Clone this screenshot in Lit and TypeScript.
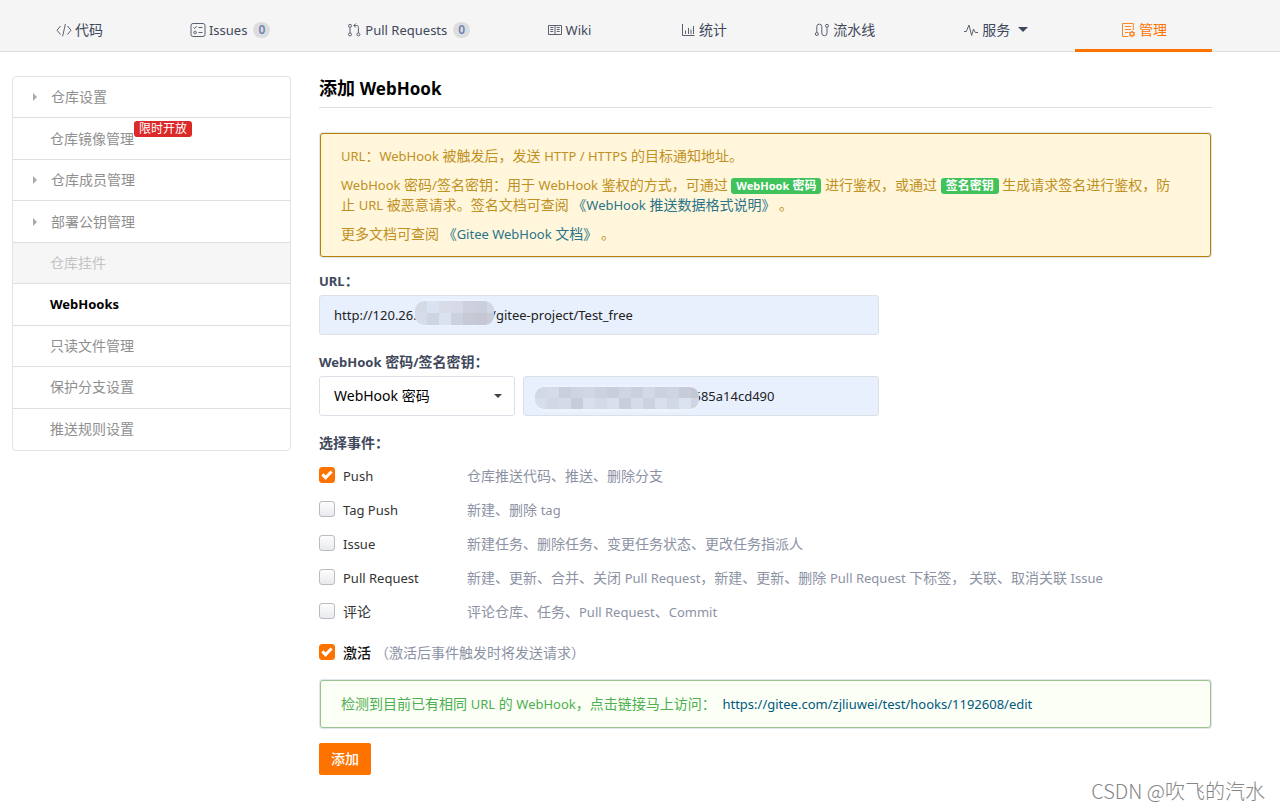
import { LitElement, html, svg, css, TemplateResult } from "lit";
import { customElement, state } from "lit/decorators.js";
import { classMap } from "lit/directives/class-map.js";

/** Wraps runs of Latin text so that they sit a step smaller than the Chinese text. */
const mix = (text: string) =>
  text
    .split(/([\x21-\x7e]+(?: [\x21-\x7e]+)*)/)
    .filter((part) => part !== "")
    .map((part) => (/^[\x21-\x7e]/.test(part) ? html`<span class="latin">${part}</span>` : part));

const icon = (body: TemplateResult) => html`
  <svg class="icon" viewBox="0 0 16 16" width="16" height="16" fill="none" stroke="currentColor" aria-hidden="true">
    ${body}
  </svg>
`;

const icons = {
  code: svg`<path d="M4.500 4 1 8.200l3.500 4.300M11.500 4 15 8.200l-3.500 4.300M9.400 2 6.600 14.300"/>`,
  issues: svg`<rect x="1" y="1.500" width="14" height="13" rx="2"/><path d="m3.500 5.400 1.200 1 2-2.300M8.500 5.500h4M8.500 10.500h4"/><rect x="3.900" y="9.300" width="2.300" height="2.300" rx=".6"/>`,
  pull: svg`<circle cx="4" cy="3.800" r="1.500"/><circle cx="4" cy="12.400" r="1.500"/><circle cx="12.400" cy="12.400" r="1.500"/><path d="M4 5.300v5.600M12.400 10.900V5.200c0-1.200-.5-1.700-1.700-1.700H8M9.800 1.500 7.800 3.500l2 2"/>`,
  wiki: svg`<path d="M1.500 3.500h13v9h-13zM8 3.500v9M3.300 5.500h3M3.300 7.500h3M3.300 9.500h3M9.700 5.500h3M9.700 7.500h3M9.700 9.500h3"/>`,
  stats: svg`<path d="M2.500 2v11.500h12M5.500 12V8.500M8.500 12V6M11 12V7.500M13.500 12V4"/>`,
  flow: svg`<circle cx="2.800" cy="12" r="1.500"/><circle cx="13" cy="3.800" r="1.500"/><path d="M2.800 10.500V4.600a2.500 2.500 0 0 1 5 0v6.500a2.600 2.600 0 0 0 5.200 0V5.300"/>`,
  pulse: svg`<path d="M1 9.500h2.300L6 3l2.600 10.500L10.500 7l1.800 3.500H15"/>`,
  manage: svg`<path d="M8.500 14.500h-6v-13h10.800v6.500M5 4.500h6M5 7.500h6M5 10.500h3.500"/><circle cx="12" cy="12" r="1.900" stroke-width="1.500"/><path d="M12 8.800v1M12 14.200v1M9.200 10.400l.9.500M13.900 13.100l.9.500M9.200 13.600l.9-.5M13.900 10.900l.9-.5"/>`,
};

interface Tab {
  label: string;
  icon: TemplateResult;
  count?: number;
  menu?: boolean;
  active?: boolean;
}

const tabs: Tab[] = [
  { label: "代码", icon: icons.code },
  { label: "Issues", icon: icons.issues, count: 0 },
  { label: "Pull Requests", icon: icons.pull, count: 0 },
  { label: "Wiki", icon: icons.wiki },
  { label: "统计", icon: icons.stats },
  { label: "流水线", icon: icons.flow },
  { label: "服务", icon: icons.pulse, menu: true },
  { label: "管理", icon: icons.manage, active: true },
];

const sections = [
  { label: "仓库设置", folder: true },
  { label: "仓库镜像管理", badge: "限时开放" },
  { label: "仓库成员管理", folder: true },
  { label: "部署公钥管理", folder: true },
  { label: "仓库挂件", disabled: true },
  { label: "WebHooks", active: true },
  { label: "只读文件管理" },
  { label: "保护分支设置" },
  { label: "推送规则设置" },
] as { label: string; folder?: boolean; badge?: string; disabled?: boolean; active?: boolean }[];

const events = [
  { id: "push", label: "Push", text: "仓库推送代码、推送、删除分支", on: true },
  { id: "tag", label: "Tag Push", text: "新建、删除 tag", on: false },
  { id: "issue", label: "Issue", text: "新建任务、删除任务、变更任务状态、更改任务指派人", on: false },
  {
    id: "pr",
    label: "Pull Request",
    text: "新建、更新、合并、关闭 Pull Request，新建、更新、删除 Pull Request 下标签， 关联、取消关联 Issue",
    on: false,
  },
  { id: "note", label: "评论", text: "评论仓库、任务、Pull Request、Commit", on: false },
];

const base = css`
  * {
    box-sizing: border-box;
  }
  a {
    color: inherit;
    text-decoration: none;
  }
  .latin {
    font-size: 13px;
    line-height: 1;
  }
`;

@customElement("repo-tabs")
class RepoTabs extends LitElement {
  static styles = [
    base,
    css`
      :host {
        display: block;
        background: #f5f5f5;
        border-bottom: 1px solid #dcddde;
      }
      .tabs {
        display: grid;
        grid-template-columns: 135fr 166fr 190fr 131fr 138fr 144fr 158fr 137fr;
        height: 51px;
        padding: 0 68px 0 12px;
      }
      .tab {
        display: flex;
        align-items: center;
        justify-content: center;
        padding-top: 8px;
        line-height: 20px;
        color: #40485b;
        white-space: nowrap;
      }
      .active {
        color: #fe7300;
        margin-bottom: -1px;
        box-shadow: inset 0 -3px #fe7300;
      }
      .icon {
        margin-right: 3px;
        opacity: 0.85;
      }
      .count {
        margin-left: 6px;
        min-width: 17px;
        height: 16px;
        border-radius: 8px;
        background: #dcdddf;
        color: #6f83b0;
        font-size: 12px;
        font-weight: 600;
        line-height: 16px;
        text-align: center;
      }
      .caret {
        margin-left: 8px;
        border: 5px solid transparent;
        border-top-color: #40485b;
        border-bottom: 0;
      }
    `,
  ];

  render() {
    return html`<nav class="tabs">
      ${tabs.map(
        (t) => html`<a class=${classMap({ tab: true, active: !!t.active })} href="#"
          >${icon(t.icon)}<span>${mix(t.label)}</span>${t.count !== undefined
            ? html`<span class="count">${t.count}</span>`
            : ""}${t.menu ? html`<span class="caret"></span>` : ""}</a
        >`
      )}
    </nav>`;
  }
}

@customElement("settings-menu")
class SettingsMenu extends LitElement {
  static styles = [
    base,
    css`
      :host {
        display: block;
      }
      .menu {
        display: grid;
        grid-auto-rows: 1fr;
        min-height: 375px;
        border: 1px solid #dfe3e9;
        border-radius: 4px;
        overflow: hidden;
      }
      .item {
        display: flex;
        align-items: center;
        padding-left: 37px;
        border-bottom: 1px solid #dddfe3;
        color: #8f8f8f;
        line-height: 20px;
      }
      .item:last-child {
        border-bottom: 0;
      }
      .folder {
        padding-left: 20px;
      }
      .folder::before {
        content: "";
        margin-right: 14px;
        border: 4px solid transparent;
        border-left-color: #aaa;
        border-right: 0;
      }
      .disabled {
        background: #f6f6f6;
        color: #c3c3c3;
      }
      .active {
        color: #000;
        font-weight: 700;
      }
      .badge {
        align-self: flex-start;
        margin-top: 3px;
        padding: 0 5px;
        border-radius: 3px;
        background: #db2828;
        color: #fff;
        font-size: 12px;
        line-height: 16px;
      }
    `,
  ];

  render() {
    return html`<nav class="menu">
      ${sections.map(
        (s) => html`<a
          class=${classMap({ item: true, folder: !!s.folder, disabled: !!s.disabled, active: !!s.active })}
          href="#"
          ><span>${mix(s.label)}</span>${s.badge ? html`<span class="badge">${s.badge}</span>` : ""}</a
        >`
      )}
    </nav>`;
  }
}

@customElement("webhook-form")
class WebhookForm extends LitElement {
  static styles = [
    base,
    css`
      :host {
        display: block;
      }
      .title {
        margin: 0;
        padding-bottom: 6px;
        border-bottom: 1px solid #dfe0e2;
        color: #000;
        font-size: 18px;
        font-weight: 700;
        line-height: 25px;
      }
      .title .latin {
        font-size: 17px;
      }
      .note {
        margin: 25px 1px 0;
        padding: 12px 32px 12px 20px;
        border: 1px solid #b58105;
        border-radius: 3px;
        background: #fff6db;
        box-shadow: 0 0 0 1px #dfe6ec;
        color: #c09022;
        line-height: 20px;
      }
      .note p {
        margin: 0 0 9px;
      }
      .note p:last-child {
        margin: 0;
      }
      .note a {
        color: #2b7489;
      }
      .tag {
        display: inline-block;
        padding: 0 5px;
        border-radius: 3px;
        background: #3fc35a;
        color: #fff;
        font-size: 12px;
        font-weight: 700;
        line-height: 16px;
      }
      .tag .latin {
        font-size: 11px;
      }
      .label {
        display: block;
        margin: 0 0 4px;
        color: #40485b;
        font-weight: 700;
        line-height: 20px;
      }
      .fields {
        display: grid;
        grid-template-columns: 196px 1fr;
        column-gap: 8px;
        max-width: 560px;
        padding-top: 14px;
      }
      .full {
        grid-column: 1 / -1;
      }
      .spaced {
        margin-top: 17px;
      }
      .box {
        position: relative;
      }
      .control {
        display: block;
        width: 100%;
        height: 40px;
        margin: 0;
        padding: 0 14px;
        border: 1px solid #dcdfe6;
        border-radius: 3px;
        background: #e8effd;
        color: #222;
        font: inherit;
        font-size: 13px;
        outline: 0;
      }
      .select {
        appearance: none;
        background: #fff;
        font-size: 14px;
        color: #000;
      }
      .box .caret {
        position: absolute;
        right: 13px;
        top: 18px;
        border: 4px solid transparent;
        border-top-color: #444;
        border-bottom: 0;
        pointer-events: none;
      }
      .mask {
        position: absolute;
        pointer-events: none;
      }
      .mask-url {
        left: 96px;
        top: 4px;
      }
      .mask-key {
        left: 12px;
        top: 9px;
      }
      .events {
        display: grid;
        grid-template-columns: 148px 1fr;
        row-gap: 14px;
        margin-top: 9px;
        line-height: 20px;
        color: #8c92a4;
      }
      .check {
        display: flex;
        align-items: center;
        gap: 8px;
        color: #333;
      }
      .active-row {
        display: flex;
        gap: 4px;
        margin-top: 21px;
        line-height: 20px;
        color: #8c92a4;
      }
      .strong {
        font-weight: 500;
        color: #111;
      }
      .tick {
        appearance: none;
        flex: none;
        position: relative;
        width: 16px;
        height: 16px;
        margin: 0 0 2px;
        border: 1px solid #bbbcc0;
        border-radius: 3px;
        background: linear-gradient(#fdfdfd, #e9eaef);
      }
      .tick:checked {
        border-color: #fe7300;
        background: #fe7300;
      }
      .tick:checked::after {
        content: "";
        box-sizing: border-box;
        position: absolute;
        left: 2px;
        top: 3px;
        width: 10px;
        height: 6px;
        border: solid #fff;
        border-width: 0 0 3px 3px;
        transform: rotate(-45deg);
      }
      .found {
        margin: 17px 1px 0;
        padding: 13px 20px;
        border: 1px solid #9cc291;
        border-radius: 3px;
        background: #fcfff5;
        box-shadow: 0 0 0 1px #dfe6ec;
        color: #4caf50;
        line-height: 20px;
      }
      .found a {
        margin-left: 3px;
        color: #005980;
      }
      .submit {
        display: block;
        margin-top: 15px;
        height: 32px;
        padding: 0 12px;
        border: 0;
        border-radius: 2px;
        background: #fe7300;
        color: #fff;
        font: inherit;
        font-weight: 500;
        line-height: 20px;
      }
    `,
  ];

  @state() private url = "http://120.26." + "\u00a0".repeat(22) + "/gitee-project/Test_free";
  @state() private key = "\u00a0".repeat(46) + "585a14cd490";

  /** Opaque mosaic that hides the private part of a value. */
  private mask(cls: string, width: number, rowHeight: number, shades: string[][]) {
    const cell = 12;
    return html`<svg class="mask ${cls}" width=${width} height="27" viewBox="0 0 ${width} 27" aria-hidden="true">
      <defs>
        <clipPath id="${cls}-clip"><rect width=${width} height=${rowHeight * 2} y="2" rx="9" /></clipPath>
      </defs>
      <rect width=${width} height="27" rx="10" fill="#edf3fd" />
      <g clip-path="url(#${cls}-clip)">
        ${shades.map((row, r) =>
          row.map(
            (fill, c) =>
              svg`<rect x=${c * cell} y=${2 + r * rowHeight} width=${cell} height=${rowHeight} fill=${fill}></rect>`
          )
        )}
      </g>
    </svg>`;
  }

  render() {
    return html`
      <h1 class="title">${mix("添加 WebHook")}</h1>
      <section class="note">
        <p>${mix("URL：WebHook 被触发后，发送 HTTP / HTTPS 的目标通知地址。")}</p>
        <p>
          ${mix("WebHook 密码/签名密钥：用于 WebHook 鉴权的方式，可通过")}
          <span class="tag">${mix("WebHook 密码")}</span> 进行鉴权，或通过
          <span class="tag">签名密钥</span> ${mix("生成请求签名进行鉴权，防止 URL 被恶意请求。签名文档可查阅")}
          <a href="#">${mix("《WebHook 推送数据格式说明》")}</a> 。
        </p>
        <p>更多文档可查阅 <a href="#">${mix("《Gitee WebHook 文档》")}</a> 。</p>
      </section>
      <form @submit=${(e: Event) => e.preventDefault()}>
        <div class="fields">
          <label class="label full" for="url">${mix("URL：")}</label>
          <div class="box full">
            <input class="control" id="url" type="text" .value=${this.url} />
            ${this.mask("mask-url", 79, 12, [
              ["#d5dae7", "#d9e3f1", "#d7dce8", "#d6dae7", "#cdd1de", "#cbcfdc", "#d2d7e4"],
              ["#d6dcea", "#cfd4e1", "#dae1ef", "#cdd1dd", "#c6cad6", "#c5c8d2", "#c8ccd6"],
            ])}
          </div>
          <label class="label full spaced" for="kind">${mix("WebHook 密码/签名密钥：")}</label>
          <div class="box">
            <select class="control select" id="kind">
              <option>WebHook 密码</option>
              <option>签名密钥</option>
            </select>
            <span class="caret"></span>
          </div>
          <div class="box">
            <input class="control" id="key" type="text" aria-label="WebHook 密码" .value=${this.key} />
            ${this.mask("mask-key", 164, 11, [
              ["#d3d8e5", "#d6dbe8", "#cbcfdc", "#cfd4e0", "#d2d7e4", "#cdd2de", "#cacedb", "#d0d5e2", "#cbd0dc", "#d3d8e5", "#ccd1dd", "#cfd4e0", "#c8ccd8", "#c4c8d3"],
              ["#d7ddea", "#d2d7e4", "#d5dae8", "#c8ccd9", "#d8deec", "#d4d9e7", "#d9dfed", "#caceda", "#d6dbe9", "#cdd2df", "#d8deec", "#d2d7e5", "#dbe2f0", "#d0d5e1"],
            ])}
          </div>
          <span class="label full spaced">选择事件：</span>
        </div>
        <div class="events">
          ${events.map(
            (e) => html`
              <label class="check" for=${e.id}>
                <input class="tick" type="checkbox" id=${e.id} .checked=${e.on} />
                <span>${mix(e.label)}</span>
              </label>
              <span>${mix(e.text)}</span>
            `
          )}
        </div>
        <div class="active-row">
          <label class="check strong" for="enabled">
            <input class="tick" type="checkbox" id="enabled" .checked=${true} />
            <span>激活</span>
          </label>
          <span>（激活后事件触发时将发送请求）</span>
        </div>
        <div class="found">
          ${mix("检测到目前已有相同 URL 的 WebHook，点击链接马上访问：")}
          <a href="#">${mix("https://gitee.com/zjliuwei/test/hooks/1192608/edit")}</a>
        </div>
        <button class="submit" type="submit">添加</button>
      </form>
    `;
  }
}

@customElement("app-root")
class AppRoot extends LitElement {
  static styles = [
    base,
    css`
      :host {
        display: block;
        position: relative;
        min-height: 100vh;
        background: #fff;
        color: #40485b;
        font: 14px/20px "Noto Sans", "Noto Sans CJK SC", sans-serif;
      }
      .page {
        display: grid;
        grid-template-columns: 279px minmax(0, 1fr);
        column-gap: 28px;
        align-items: start;
        padding: 24px 68px 24px 12px;
      }
      .watermark {
        position: absolute;
        right: 15px;
        bottom: 5px;
        color: #858585;
        font: 300 20px/28px "Noto Sans CJK SC", sans-serif;
      }
    `,
  ];

  render() {
    return html`
      <repo-tabs></repo-tabs>
      <div class="page">
        <settings-menu></settings-menu>
        <webhook-form></webhook-form>
      </div>
      <span class="watermark">CSDN @吹飞的汽水</span>
    `;
  }
}
